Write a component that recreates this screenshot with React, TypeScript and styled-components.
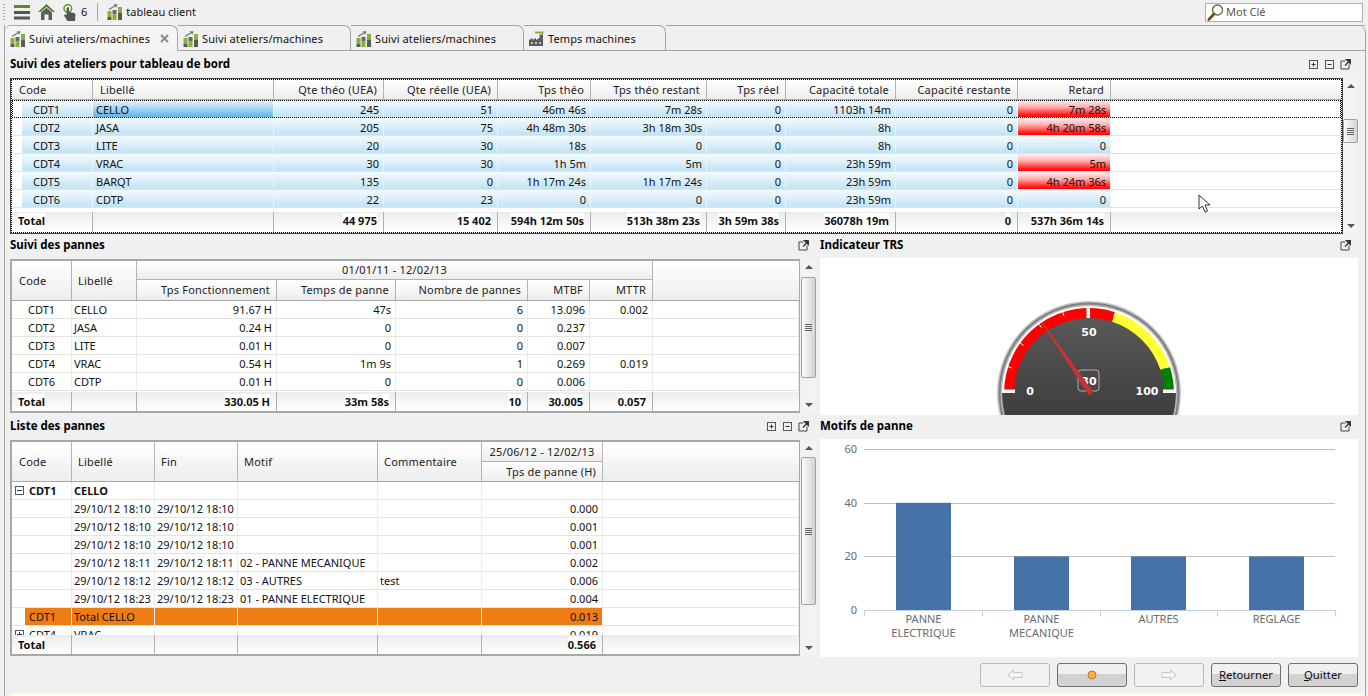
import React from 'react';
import styled, { createGlobalStyle } from 'styled-components';

const Global = createGlobalStyle`
  html, body { margin: 0; padding: 0; overflow: hidden; background: #f0f0f0; }
  * { box-sizing: border-box; }
`;

const FONT = `"Noto Sans", "Open Sans", sans-serif`;

const Root = styled.div`
  width: 1368px; height: 696px; display: flex; flex-direction: column; overflow: hidden;
  background: #f0f0f0; font: 11px/16px ${FONT}; color: #111; position: relative;
`;
const Toolbar = styled.div`
  height: 25px; flex: none; display: flex; align-items: center; padding: 0 5px 1px 3px;
`;
const Grip = styled.div`
  width: 2px; height: 16px; margin-right: 9px;
  background: repeating-linear-gradient(#aaa 0 1px, transparent 1px 3px);
`;
const ToolIcon = styled.span`
  display: inline-flex; margin-right: ${p => p.$gap ?? 8}px;
`;
const ToolText = styled.span`
  font-size: 11px;
`;
const ToolSep = styled.span`
  width: 1px; height: 18px; background: #a8a8a8; margin: 0 9px 0 10px;
`;
const Search = styled.div`
  margin-left: auto; width: 158px; height: 19px; border: 1px solid #b0b0b0; background: #fff;
  display: flex; align-items: center; gap: 2px; padding-left: 1px; color: #555;
`;
const Frame = styled.div`
  flex: 1; min-height: 0; margin: 0 2px 0 4px; border-left: 1px solid #a4a4a4; border-right: 1px solid #a4a4a4;
  border-top-right-radius: 8px; display: flex; flex-direction: column;
`;
const TabStrip = styled.div`
  height: 26px; flex: none; display: flex;
`;
const Tab = styled.div`
  width: ${p => p.$w}px; height: 26px; flex: none; display: flex; align-items: center;
  gap: 3px; padding-left: 5px; padding-top: 1px; position: relative; letter-spacing: 0.1px;
  border-top: 1px solid #a4a4a4; border-right: 1px solid #a4a4a4;
  border-bottom: 1px solid ${p => (p.$active ? '#f0f0f0' : '#a4a4a4')};
  border-top-right-radius: 7px; border-top-left-radius: ${p => (p.$active ? 6 : 0)}px;
  background: ${p => (p.$active ? '#f4f4f4' : '#f0f0f0')};
`;
const TabClose = styled.svg`
  margin-left: auto; margin-right: 8px;
`;
const TabRest = styled.div`
  flex: 1; border-top: 1px solid #a4a4a4; border-bottom: 1px solid #a4a4a4;
`;
const Main = styled.div`
  flex: 1; min-height: 0; display: flex; flex-direction: column; padding: 0 7px 0 5px;
`;
const TitleBar = styled.div`
  height: ${p => p.$h}px; flex: none; display: flex; align-items: center; gap: 5px;
  padding-bottom: ${p => p.$pb ?? 0}px;
`;
const Title = styled.span`
  font-weight: 700; font-size: 11.5px; margin-right: auto; color: #000;
`;
const Body = styled.div`
  display: flex; height: ${p => p.$h}px; flex: none; gap: ${p => p.$gap ?? 1}px;
`;
const Lower = styled.div`
  display: grid; grid-template-columns: 806px 538px; column-gap: 4px;
`;
const Stack = styled.div`
  display: flex; flex-direction: column; height: ${p => p.$h}px; overflow: hidden;
`;
const Card = styled.div`
  background: #fff; flex: 1; min-height: 0; overflow: hidden; display: flex; justify-content: center;
`;
const Table = styled.div`
  flex: 1; min-width: 0; display: flex; flex-direction: column; background: #fff; position: relative;
  border: ${p => (p.$focus ? '1px solid #444' : '2px solid #a8a8a8')};
  ${p => (p.$focus ? 'outline: 1px dotted #000; outline-offset: -2px;' : 'border-right-width: 1px; border-bottom-width: 2px;')}
  padding: ${p => (p.$focus ? '1px' : '0')};
`;
const Head = styled.div`
  display: grid; flex: none; grid-template-columns: ${p => p.$cols};
  grid-template-rows: ${p => p.$rows};
  border-bottom: 1px solid #a8a8a8;
  background: linear-gradient(#fff, #ececec);
`;
const HeadCell = styled.div`
  grid-column: ${p => p.$col}; grid-row: ${p => p.$row ?? 1};
  display: flex; align-items: center; overflow: hidden; white-space: nowrap; letter-spacing: 0.2px;
  justify-content: ${p => (p.$align === 'right' ? 'flex-end' : p.$align === 'center' ? 'center' : 'flex-start')};
  padding: 0 ${p => (p.$align === 'right' ? 6 : 0)}px 0 ${p => (p.$align === 'right' || p.$align === 'center' ? 0 : p.$pl ?? 6)}px;
  border-right: ${p => (p.$last ? 'none' : '1px solid #b4b4b4')};
  ${p => (p.$under ? 'border-bottom: 1px solid #b4b4b4;' : '')}
  background: linear-gradient(#fff, #ededed);
  color: #222;
`;
const Rows = styled.div`
  flex: 1; min-height: 0; overflow: hidden;
`;
const Row = styled.div`
  display: grid; grid-template-columns: ${p => p.$cols}; height: 18px; position: relative;
  border-bottom: 1px solid #e3e3e3;
  ${p => (p.$focus ? 'outline: 1px dotted #000; outline-offset: -1px; z-index: 1;' : '')}
`;
const toneBg = {
  blue: 'linear-gradient(#f4fbfe, #c2e2f4)',
  sel: 'linear-gradient(#eef7fd, #5fb3e8)',
  red: 'linear-gradient(#fff0f0 0%, #ffb0b0 40%, #ff2020 85%, #ff0000 100%)',
  orange: '#ee7c14',
  none: 'transparent',
};
const Cell = styled.div`
  display: flex; align-items: center; gap: 5px; overflow: hidden; white-space: nowrap; min-width: 0;
  justify-content: ${p => (p.$right ? 'flex-end' : 'flex-start')};
  padding: ${p => p.$pt ?? 0}px ${p => (p.$right ? 4 : 0)}px 0 ${p => (p.$right ? 0 : p.$pl ?? 2)}px;
  margin-left: ${p => p.$ml ?? 0}px;
  font-weight: ${p => (p.$bold ? 700 : 400)};
  background: ${p => toneBg[p.$tone ?? 'none']};
  border-right: 1px solid ${p => (p.$tone && p.$tone !== 'none' ? '#eef6fb' : '#ececec')};
`;
const TotalRow = styled.div`
  display: grid; flex: none; grid-template-columns: ${p => p.$cols}; height: ${p => p.$h ?? 19}px;
  background: linear-gradient(#ececec, #fff);
`;
const TotalCell = styled.div`
  display: flex; align-items: center; white-space: nowrap; overflow: hidden;
  justify-content: ${p => (p.$right ? 'flex-end' : 'flex-start')};
  padding: 0 ${p => (p.$right ? 6 : 0)}px ${p => p.$pb ?? 0}px ${p => (p.$right ? 0 : 6)}px;
  border-right: ${p => (p.$last ? 'none' : '1px solid #b0b0b0')};
  font-weight: 700;
`;
const TotalText = styled.span`
  background: #fff;
`;
const Scroll = styled.div`
  width: 15px; flex: none; display: flex; flex-direction: column; align-items: center; background: #f3f3f3;
  position: relative;
`;
const ArrowUp = styled.div`
  width: 0; height: 0; border: 4px solid transparent; border-top: 0; border-bottom: 4px solid #555; margin-top: 6px; flex: none;
`;
const ArrowDown = styled.div`
  width: 0; height: 0; border: 4px solid transparent; border-bottom: 0; border-top: 4px solid #555; margin-bottom: 6px; margin-top: auto; flex: none;
`;
const Thumb = styled.div`
  width: 15px; height: ${p => p.$h}px; margin-top: ${p => p.$top}px; flex: none; border: 1px solid #a0a0a0; border-radius: 2px;
  background: linear-gradient(90deg, #fbfbfb, #d4d4d4); display: flex; align-items: center; justify-content: center;
`;
const ThumbGrip = styled.div`
  width: 7px; height: 7px; background: repeating-linear-gradient(#666 0 1px, transparent 1px 2px);
`;
const Footer = styled.div`
  height: 36px; flex: none; display: flex; justify-content: flex-end; gap: 7px; padding: 6px 7px 6px 0;
`;
const Btn = styled.div`
  width: ${p => p.$w ?? 70}px; height: 24px; border-radius: 3px; display: flex; align-items: center; justify-content: center;
  border: 1px solid ${p => (p.$off ? '#b8b8b8' : '#6f6f6f')};
  background: ${p => (p.$off ? '#f2f2f2' : 'linear-gradient(#f0f0f0 0 45%, #d2d2d2 45% 100%)')};
  font-size: 11.3px; color: #111;
`;
const Under = styled.span`
  text-decoration: underline;
`;
const Strip = styled.div`
  height: 3px; flex: none; margin-left: 5px; background: #fdfde6;
`;
const Cursor = styled.svg`
  position: absolute; left: 1198px; top: 194px;
`;
const Spacer = styled.div`
  width: 2px; flex: none;
`;

const TabChart = () => (
  <svg width="16" height="16" viewBox="0 0 16 16">
    <rect x="0.5" y="7" width="4" height="6" fill="#84b432" />
    <rect x="0.5" y="13" width="4" height="3" fill="#5a5a5a" />
    <rect x="5.5" y="6" width="4" height="4.5" fill="#6a6a6a" />
    <rect x="5.5" y="10.5" width="4" height="5.5" fill="#84b432" />
    <rect x="11" y="3" width="4" height="5.5" fill="#84b432" />
    <rect x="11" y="8.5" width="4" height="7.5" fill="#5a5a5a" />
    <path d="M2 5.5 L8.5 1.5" fill="none" stroke="#777" strokeWidth="1.4" />
    <path d="M6.5 0.3 L10.5 0.3 L9.5 3.8Z" fill="#777" />
  </svg>
);
const Factory = () => (
  <svg width="16" height="16" viewBox="0 0 16 16">
    <path d="M0 15 L0 9 L3.5 7 L3.5 9 L7 7 L7 9 L10.5 7 L10.5 3.5 L14 3.5 L14 15Z" fill="#5c5c5c" />
    <path d="M6 1.5 L13.5 1.5 L13.5 3" fill="none" stroke="#84b432" strokeWidth="1.8" />
    <path d="M2 12h2M6 12h2M10 12h2" stroke="#e4e4e4" strokeWidth="1.6" />
  </svg>
);
const Burger = () => (
  <svg width="16" height="15" viewBox="0 0 16 15">
    <rect y="0" width="16" height="3" fill="#5f8a2c" />
    <rect y="6" width="16" height="3" fill="#555" />
    <rect y="11.5" width="16" height="3" fill="#555" />
  </svg>
);
const Home = () => (
  <svg width="17" height="16" viewBox="0 0 17 16">
    <path d="M0 8 L8.5 0 L17 8 L14.5 8 L8.5 2.8 L2.5 8Z" fill="#4e7a2a" />
    <path d="M3 8.5 L8.5 3.8 L14 8.5 L14 16 L10.5 16 L10.5 10.5 L6.5 10.5 L6.5 16 L3 16Z" fill="#5a5f55" />
  </svg>
);
const Touch = () => (
  <svg width="13" height="17" viewBox="0 0 13 17">
    <circle cx="4.8" cy="4.5" r="3.8" fill="none" stroke="#6a9a2e" strokeWidth="1.6" />
    <path d="M3.6 4.5 a1.2 1.2 0 0 1 2.4 0 L6 8 L11 9 Q12.5 9.5 12.5 11 L12 17 L4.5 17 L1 11.5 Q1 10 3.6 11Z" fill="#555" />
  </svg>
);
const Magnifier = () => (
  <svg width="17" height="17" viewBox="0 0 17 17">
    <circle cx="10.5" cy="6" r="5" fill="#fffdf0" stroke="#6a6a5a" strokeWidth="1.4" />
    <path d="M7 10 L1.8 15.5" stroke="#6b4a22" strokeWidth="2.6" strokeLinecap="round" />
  </svg>
);
const Popout = () => (
  <svg width="11" height="11" viewBox="0 0 11 11">
    <path d="M5.5 2 H1 V10 H9 V5.5" fill="none" stroke="#444" strokeWidth="1" />
    <path d="M5 6.5 L9 2.5 M6.5 0.7 H10.3 V4.5Z" fill="#333" stroke="#333" strokeWidth="1.3" />
  </svg>
);
const TreeBox = ({ open }: { open?: boolean }) => (
  <svg width="9" height="9" viewBox="0 0 9 9" style={{ flex: 'none' }}>
    <rect x="0.5" y="0.5" width="8" height="8" fill="#fff" stroke="#555" />
    <path d={open ? 'M2 4.5H7' : 'M2 4.5H7M4.5 2V7'} stroke="#333" />
  </svg>
);
const BoxBtn = ({ open }: { open?: boolean }) => (
  <svg width="11" height="11" viewBox="0 0 11 11">
    <rect x="1.5" y="1.5" width="8" height="8" fill="none" stroke="#555" />
    <path d={open ? 'M3.5 5.5H7.5' : 'M3.5 5.5H7.5M5.5 3.5V7.5'} stroke="#333" />
  </svg>
);
const ArrowIcon = ({ right }: { right?: boolean }) => (
  <svg width="16" height="12" viewBox="0 0 16 12" style={right ? { transform: 'scaleX(-1)' } : undefined}>
    <path d="M1 6 L6.5 1 L6.5 3.5 L15 3.5 L15 8.5 L6.5 8.5 L6.5 11Z" fill="#f6f6f6" stroke="#c4c4c4" />
  </svg>
);
const Dot = () => (
  <svg width="10" height="10" viewBox="0 0 10 10">
    <circle cx="5" cy="5" r="4" fill="#fbb040" stroke="#c8702a" strokeWidth="1" />
  </svg>
);

const T1 = '81px 181px 110px 114px 93px 116px 79px 110px 122px 93px 1fr';
const t1Head = ['Code', 'Libellé', 'Qte théo (UEA)', 'Qte réelle (UEA)', 'Tps théo', 'Tps théo restant', 'Tps réel', 'Capacité totale', 'Capacité restante', 'Retard'];
const t1Rows = [
  ['CDT1', 'CELLO', '245', '51', '46m 46s', '7m 28s', '0', '1103h 14m', '0', '7m 28s'],
  ['CDT2', 'JASA', '205', '75', '4h 48m 30s', '3h 18m 30s', '0', '8h', '0', '4h 20m 58s'],
  ['CDT3', 'LITE', '20', '30', '18s', '0', '0', '8h', '0', '0'],
  ['CDT4', 'VRAC', '30', '30', '1h 5m', '5m', '0', '23h 59m', '0', '5m'],
  ['CDT5', 'BARQT', '135', '0', '1h 17m 24s', '1h 17m 24s', '0', '23h 59m', '0', '4h 24m 36s'],
  ['CDT6', 'CDTP', '22', '23', '0', '0', '0', '23h 59m', '0', '0'],
];
const t1Total = ['Total', '', '44 975', '15 402', '594h 12m 50s', '513h 38m 23s', '3h 59m 38s', '36078h 19m', '0', '537h 36m 14s'];

const T2 = '60px 65px 140px 119px 132px 62px 63px 1fr';
const t2Sub = ['Tps Fonctionnement', 'Temps de panne', 'Nombre de pannes', 'MTBF', 'MTTR'];
const t2Rows = [
  ['CDT1', 'CELLO', '91.67 H', '47s', '6', '13.096', '0.002'],
  ['CDT2', 'JASA', '0.24 H', '0', '0', '0.237', ''],
  ['CDT3', 'LITE', '0.01 H', '0', '0', '0.007', ''],
  ['CDT4', 'VRAC', '0.54 H', '1m 9s', '1', '0.269', '0.019'],
  ['CDT6', 'CDTP', '0.01 H', '0', '0', '0.006', ''],
];
const t2Total = ['Total', '', '330.05 H', '33m 58s', '10', '30.005', '0.057'];

const T3 = '60px 83px 83px 140px 104px 121px 1fr';
const t3Rows = [
  ['29/10/12 18:10', '29/10/12 18:10', '', '', '0.000'],
  ['29/10/12 18:10', '29/10/12 18:10', '', '', '0.001'],
  ['29/10/12 18:10', '29/10/12 18:10', '', '', '0.001'],
  ['29/10/12 18:11', '29/10/12 18:11', '02 - PANNE MECANIQUE', '', '0.002'],
  ['29/10/12 18:12', '29/10/12 18:12', '03 - AUTRES', 'test', '0.006'],
  ['29/10/12 18:23', '29/10/12 18:23', '01 - PANNE ELECTRIQUE', '', '0.004'],
];

const polar = (v: number, r: number, cx = 100, cy = 135) => {
  const a = ((-90 + v * 1.8) * Math.PI) / 180;
  return [cx + r * Math.sin(a), cy - r * Math.cos(a)];
};
const band = (from: number, to: number, r0: number, r1: number) => {
  const [a, b] = polar(from, r1);
  const [c, d] = polar(to, r1);
  const [e, f] = polar(to, r0);
  const [g, h] = polar(from, r0);
  return `M${a} ${b} A${r1} ${r1} 0 0 1 ${c} ${d} L${e} ${f} A${r0} ${r0} 0 0 0 ${g} ${h}Z`;
};

const Gauge = () => (
  <svg width="200" height="157" viewBox="0 0 200 157">
    <defs>
      <linearGradient id="face" gradientUnits="userSpaceOnUse" x1="0" y1="55" x2="0" y2="157">
        <stop offset="0" stopColor="#5a5a5a" />
        <stop offset="1" stopColor="#3e3e3e" />
      </linearGradient>
    </defs>
    <circle cx="100" cy="135" r="92" fill="#c4c4c4" />
    <circle cx="100" cy="135" r="90.5" fill="#808080" />
    <circle cx="100" cy="135" r="88.5" fill="#b8b8b8" />
    <circle cx="100" cy="135" r="87" fill="#fff" />
    <circle cx="100" cy="135" r="76" fill="url(#face)" />
    <path d="M13 135 A87 87 0 0 0 187 135Z" fill="url(#face)" />
    <path d={band(0, 60, 75, 85)} fill="#ff0000" />
    <path d={band(60, 90, 75, 85)} fill="#ffff33" />
    <path d={band(90, 100, 75, 85)} fill="#008000" />
    {[10, 20, 30, 40, 60, 70, 80, 90].map(v => {
      const [a, b] = polar(v, 85);
      const [c, d] = polar(v, 81);
      return <line key={v} x1={a} y1={b} x2={c} y2={d} stroke="#fff" strokeWidth="1" />;
    })}
    <rect x="97.5" y="49" width="3.5" height="11" fill="#fff" />
    <rect x="15" y="131.5" width="11" height="3.5" fill="#fff" />
    <rect x="174" y="131.5" width="11" height="3.5" fill="#fff" />
    <text x="100" y="78" textAnchor="middle" fill="#fff" fontFamily='"DejaVu Sans", sans-serif' fontWeight="700" fontSize="11">50</text>
    <text x="41" y="137" textAnchor="middle" fill="#fff" fontFamily='"DejaVu Sans", sans-serif' fontWeight="700" fontSize="11">0</text>
    <text x="158" y="137" textAnchor="middle" fill="#fff" fontFamily='"DejaVu Sans", sans-serif' fontWeight="700" fontSize="11">100</text>
    <rect x="89" y="112" width="21" height="21" rx="3" fill="none" stroke="#b0b0b0" />
    <text x="100" y="127" textAnchor="middle" fill="#fff" fontFamily='"DejaVu Sans", sans-serif' fontWeight="700" fontSize="11">30</text>
    <path d="M52.5 65 L53.5 64.3 L104.5 134 L100 137.5Z" fill="#c83232" />
  </svg>
);

const barData = [
  { x: 76, v: 40, l: ['PANNE', 'ELECTRIQUE'] },
  { x: 194, v: 20, l: ['PANNE', 'MECANIQUE'] },
  { x: 311, v: 20, l: ['AUTRES'] },
  { x: 429, v: 20, l: ['REGLAGE'] },
];
const BarChart = () => (
  <svg width="538" height="218" viewBox="0 0 538 218" fontFamily='"Noto Sans", sans-serif' fontSize="11">
    {[[60, 10], [40, 64], [20, 117], [0, 171]].map(([v, y]) => (
      <g key={v}>
        <line x1="44" x2="515" y1={y + 0.5} y2={y + 0.5} stroke={v === 0 ? '#c0d0e0' : '#c0c0c0'} />
        <text x="37" y={y + 4} textAnchor="end" fill="#6a6a6a">{v}</text>
      </g>
    ))}
    {[44, 162, 280, 397, 515].map(x => (
      <line key={x} x1={x + 0.5} x2={x + 0.5} y1="171" y2="177" stroke="#c0d0e0" />
    ))}
    {barData.map(b => (
      <g key={b.x}>
        <rect x={b.x} y={171 - b.v * 2.68} width="55" height={b.v * 2.68} fill="#4572a7" />
        {b.l.map((t, i) => (
          <text key={t} x={b.x + 27.5} y={184 + i * 14} textAnchor="middle" fill="#6a6a6a">{t}</text>
        ))}
      </g>
    ))}
  </svg>
);

const Scrollbar = ({ top, h }: { top: number; h: number }) => (
  <Scroll>
    <ArrowUp />
    <Thumb $top={top} $h={h}><ThumbGrip /></Thumb>
    <ArrowDown />
  </Scroll>
);

export default function App() {
  return (
    <Root>
      <Global />
      <Toolbar>
        <Grip />
        <ToolIcon $gap={8}><Burger /></ToolIcon>
        <ToolIcon $gap={8}><Home /></ToolIcon>
        <ToolIcon $gap={5}><Touch /></ToolIcon>
        <ToolText>6</ToolText>
        <ToolSep />
        <ToolIcon $gap={3}><TabChart /></ToolIcon>
        <ToolText>tableau client</ToolText>
        <Search><Magnifier /><span>Mot Clé</span></Search>
      </Toolbar>
      <Frame>
        <TabStrip>
          <Tab $w={173} $active>
            <TabChart /><span>Suivi ateliers/machines</span>
            <TabClose width="9" height="9" viewBox="0 0 9 9"><path d="M1 1L8 8M8 1L1 8" stroke="#8a8a8a" strokeWidth="2" /></TabClose>
          </Tab>
          <Tab $w={173}><TabChart /><span>Suivi ateliers/machines</span></Tab>
          <Tab $w={173}><TabChart /><span>Suivi ateliers/machines</span></Tab>
          <Tab $w={142}><Factory /><span>Temps machines</span></Tab>
          <TabRest />
        </TabStrip>
        <Main>
          <TitleBar $h={27} $pb={1}>
            <Title>Suivi des ateliers pour tableau de bord</Title>
            <BoxBtn /><BoxBtn open /><Popout />
            <Spacer />
          </TitleBar>
          <Body $h={156} $gap={0}>
            <Table $focus>
              <Head $cols={T1} $rows="19px">
                {t1Head.map((h, i) => (
                  <HeadCell key={h} $col={i + 1} $align={i > 1 ? 'right' : undefined} $pl={7}>{h}</HeadCell>
                ))}
                <HeadCell $col={11} $last />
              </Head>
              <Rows>
                {t1Rows.map((r, ri) => (
                  <Row key={r[0]} $cols={T1} $focus={ri === 0}>
                    {r.map((c, i) => {
                      const red = i === 9 && c !== '0';
                      const tone = red ? 'red' : i === 1 && ri === 0 ? 'sel' : 'blue';
                      return (
                        <Cell key={i} $pt={2} $right={i > 1} $tone={tone} $ml={i === 0 ? 10 : 0} $pl={i === 0 ? 11 : 3}>{c}</Cell>
                      );
                    })}
                    <Cell />
                  </Row>
                ))}
              </Rows>
              <TotalRow $cols={T1} $h={20}>
                {t1Total.map((c, i) => (
                  <TotalCell key={i} $right={i > 1} $pb={2}>{c && <TotalText>{c}</TotalText>}</TotalCell>
                ))}
                <TotalCell $last />
              </TotalRow>
            </Table>
            <Scrollbar top={31} h={24} />
          </Body>
          <Lower>
            <Stack $h={181}>
              <TitleBar $h={25} $pb={3}>
                <Title>Suivi des pannes</Title>
                <Popout />
                <Spacer />
              </TitleBar>
              <Body $h={154}>
                <Table>
                  <Head $cols={T2} $rows="19px 20px">
                    <HeadCell $col={1} $row="1 / 3" $pl={7}>Code</HeadCell>
                    <HeadCell $col={2} $row="1 / 3">Libellé</HeadCell>
                    <HeadCell $col="3 / 8" $align="center" $under>01/01/11 - 12/02/13</HeadCell>
                    {t2Sub.map((h, i) => (
                      <HeadCell key={h} $col={i + 3} $row={2} $align="right">{h}</HeadCell>
                    ))}
                    <HeadCell $col={8} $row="1 / 3" $last />
                  </Head>
                  <Rows>
                    {t2Rows.map(r => (
                      <Row key={r[0]} $cols={T2}>
                        {r.map((c, i) => (
                          <Cell key={i} $right={i > 1} $pl={i === 0 ? 16 : 2}>{c}</Cell>
                        ))}
                        <Cell />
                      </Row>
                    ))}
                  </Rows>
                  <TotalRow $cols={T2}>
                    {t2Total.map((c, i) => (
                      <TotalCell key={i} $right={i > 1}>{c && <TotalText>{c}</TotalText>}</TotalCell>
                    ))}
                    <TotalCell $last />
                  </TotalRow>
                </Table>
                <Scrollbar top={8} h={101} />
              </Body>
            </Stack>
            <Stack $h={181}>
              <TitleBar $h={24} $pb={2}>
                <Title>Indicateur TRS</Title>
                <Popout />
                <Spacer />
              </TitleBar>
              <Card><Gauge /></Card>
            </Stack>
            <Stack $h={242}>
              <TitleBar $h={25} $pb={3}>
                <Title>Liste des pannes</Title>
                <BoxBtn /><BoxBtn open /><Popout />
                <Spacer />
              </TitleBar>
              <Body $h={216}>
                <Table>
                  <Head $cols={T3} $rows="20px 19px">
                    {['Code', 'Libellé', 'Fin', 'Motif', 'Commentaire'].map((h, i) => (
                      <HeadCell key={h} $col={i + 1} $row="1 / 3" $pl={i === 0 ? 7 : 6}>{h}</HeadCell>
                    ))}
                    <HeadCell $col={6} $align="center" $under>25/06/12 - 12/02/13</HeadCell>
                    <HeadCell $col={6} $row={2} $align="right">Tps de panne (H)</HeadCell>
                    <HeadCell $col={7} $row="1 / 3" $last />
                  </Head>
                  <Rows>
                    <Row $cols={T3}>
                      <Cell $bold $pl={3}><TreeBox open />CDT1</Cell>
                      <Cell $bold>CELLO</Cell>
                      <Cell /><Cell /><Cell /><Cell /><Cell />
                    </Row>
                    {t3Rows.map((r, ri) => (
                      <Row key={ri} $cols={T3}>
                        <Cell />
                        {r.map((c, i) => (
                          <Cell key={i} $right={i === 4}>{c}</Cell>
                        ))}
                        <Cell />
                      </Row>
                    ))}
                    <Row $cols={T3}>
                      <Cell $tone="orange" $ml={13} $pl={4}>CDT1</Cell>
                      <Cell $tone="orange">Total CELLO</Cell>
                      <Cell $tone="orange" /><Cell $tone="orange" /><Cell $tone="orange" />
                      <Cell $tone="orange" $right>0.013</Cell>
                      <Cell />
                    </Row>
                    <Row $cols={T3}>
                      <Cell $pl={3}><TreeBox />CDT4</Cell>
                      <Cell>VRAC</Cell>
                      <Cell /><Cell /><Cell />
                      <Cell $right>0.019</Cell>
                      <Cell />
                    </Row>
                  </Rows>
                  <TotalRow $cols={T3}>
                    {['Total', '', '', '', '', '0.566'].map((c, i) => (
                      <TotalCell key={i} $right={i === 5}>{c && <TotalText>{c}</TotalText>}</TotalCell>
                    ))}
                    <TotalCell $last />
                  </TotalRow>
                </Table>
                <Scrollbar top={7} h={148} />
              </Body>
            </Stack>
            <Stack $h={242}>
              <TitleBar $h={24} $pb={2}>
                <Title>Motifs de panne</Title>
                <Popout />
                <Spacer />
              </TitleBar>
              <Card><BarChart /></Card>
            </Stack>
          </Lower>
        </Main>
        <Footer>
          <Btn $off><ArrowIcon /></Btn>
          <Btn><Dot /></Btn>
          <Btn $off><ArrowIcon right /></Btn>
          <Btn><span><Under>R</Under>etourner</span></Btn>
          <Btn><span><Under>Q</Under>uitter</span></Btn>
        </Footer>
        <Strip />
      </Frame>
      <Cursor width="14" height="20" viewBox="0 0 14 20">
        <path d="M1 1 L1 15 L4.5 12 L7 18 L9.5 17 L7 11 L12 11Z" fill="#fff" stroke="#333" strokeWidth="1" />
      </Cursor>
    </Root>
  );
}
